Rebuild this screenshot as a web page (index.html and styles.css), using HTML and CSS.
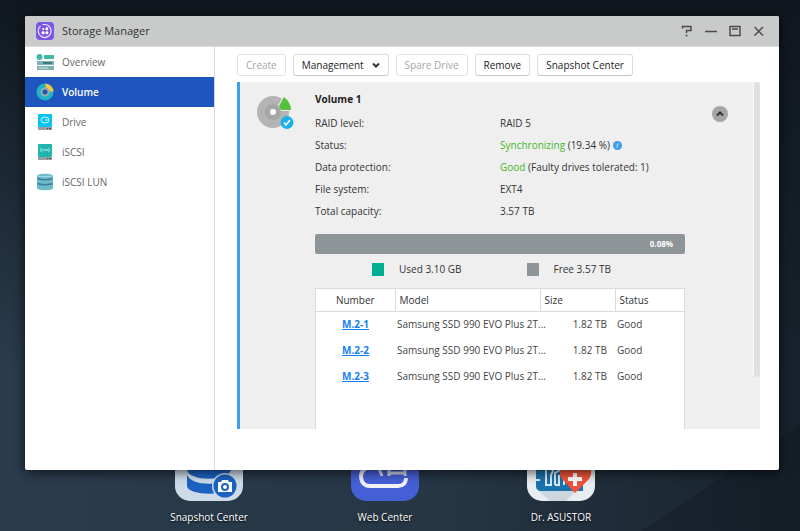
FILE: index.html
```html
<!DOCTYPE html>
<html lang="en">
<head>
    <meta charset="UTF-8">
    <title>Storage Manager</title>
    <link rel="stylesheet" href="styles.css">
</head>
<body>

<div class="desktop">
    <a class="app" href="#snapshot">
        <svg class="app-icon" viewBox="0 0 68 68">
            <rect width="68" height="68" rx="15" fill="#cddbe8"/>
            <g fill="#1c62c2">
                <path d="M12 14c0 13 44 13 44 0v10c0 13-44 13-44 0z"/>
                <path d="M12 27c0 13 44 13 44 0v9c0 13-44 13-44 0z"/>
                <path d="M12 42c4 9 22 11 44 6v6c-6 10-44 8-44-1z"/>
            </g>
            <circle cx="50" cy="53" r="13" fill="#cddbe8"/>
            <circle cx="50" cy="53" r="11.500" fill="#1c62c2"/>
            <path d="M43 49h3l1-2h6l1 2h3v10H43z" fill="#fff"/>
            <circle cx="50" cy="54" r="3" fill="none" stroke="#1c62c2" stroke-width="2"/>
        </svg>
        <span>Snapshot Center</span>
    </a>
    <a class="app" href="#web">
        <svg class="app-icon" viewBox="0 0 68 68">
            <rect width="68" height="68" rx="15" fill="#455fd6"/>
            <path d="M15 35c-8 5-6 18 4 18h28c5 0 8-3 8-8" fill="none" stroke="#f2f2fb" stroke-width="4"/>
            <path d="M27 34c2 4 3 6 4 9M38 34v9M54 34v9M38 40h16" fill="none" stroke="#d5d9f2" stroke-width="3"/>
        </svg>
        <span>Web Center</span>
    </a>
    <a class="app" href="#doctor">
        <svg class="app-icon" viewBox="0 0 68 68">
            <rect width="68" height="68" rx="15" fill="#e8edf1"/>
            <path d="M9 55l14 13h16L51 56z" fill="#ccd6df"/>
            <path d="M9 20h47v38H14c-3 0-5-2-5-5z" fill="#1c72ab"/>
            <path d="M8 47h5M19 30v22h5V42l2-4v-8M28 52V40l5-3v-7M28 52h4V42M37 52V39" fill="none" stroke="#d9edf8" stroke-width="2"/>
            <path d="M48 60L35 46c-5-7 0-15 7-15 3 0 5 1 7 4 2-3 4-4 7-4 7 0 11 8 6 15z" fill="#f0533a"/>
            <path d="M48 40v13M41 46h14" stroke="#fff" stroke-width="4"/>
        </svg>
        <span>Dr. ASUSTOR</span>
    </a>
</div>

<div class="window">
    <header class="titlebar">
        <svg class="title-icon" viewBox="0 0 18 18">
            <rect width="18" height="18" rx="4" fill="#7b55e8"/>
            <path d="M4.500 4A6.500 6.500 0 1 0 9 2.500H6.500" fill="none" stroke="#eee8ff" stroke-width="1.200"/>
            <g fill="#fff">
                <circle cx="7.200" cy="7" r="1"/>
                <rect x="9.500" y="5.300" width="2.700" height="3" rx="1"/>
                <rect x="5.700" y="9.300" width="2.800" height="3" rx="1"/>
                <rect x="9.500" y="9.300" width="2.800" height="3" rx="1"/>
            </g>
        </svg>
        <h1>Storage Manager</h1>
        <div class="window-controls">
            <button type="button" aria-label="Help">
                <svg viewBox="0 0 12 12"><path d="M1.500 3.500v-2h8.500v4H5.500v2.500M5.500 9.500v2"/></svg>
            </button>
            <button type="button" aria-label="Minimize">
                <svg viewBox="0 0 12 12"><path d="M0 6.500h12"/></svg>
            </button>
            <button type="button" aria-label="Maximize">
                <svg viewBox="0 0 12 12"><path d="M1 1.500h10v9H1zM3 4h6"/></svg>
            </button>
            <button type="button" aria-label="Close">
                <svg viewBox="0 0 12 12"><path d="M1.500 2l8.500 8.500M10 2l-8.500 8.500"/></svg>
            </button>
        </div>
    </header>

    <div class="window-body">
        <nav class="sidebar">
            <a href="#overview">
                <svg viewBox="0 0 18 18">
                    <circle cx="3.500" cy="4" r="3" fill="#3fb8a8"/>
                    <rect x="8" y="2" width="10" height="4" fill="#3fb8a8"/>
                    <rect x="1" y="8" width="17" height="4" fill="#7fb3b3"/>
                    <path d="M7 10h9" stroke="#3b7d80" stroke-width="2"/>
                    <rect x="1" y="13" width="17" height="4" fill="#7fb3b3"/>
                    <path d="M3 15h9" stroke="#d3e8e6"/>
                </svg>
                Overview
            </a>
            <a class="active" href="#volume">
                <svg viewBox="0 0 18 18">
                    <circle cx="9" cy="9" r="6" fill="none" stroke="#1fb5c4" stroke-width="5"/>
                    <path d="M9.500.5A8.500 8.500 0 0 1 17.500 8.500H13A4 4 0 0 0 9.500 5z" fill="#f6c53a"/>
                    <circle cx="9" cy="9" r="3.500" fill="#1f55ae" stroke="#9da9b5" stroke-width="2"/>
                </svg>
                Volume
            </a>
            <a href="#drive">
                <svg viewBox="0 0 18 18">
                    <rect x="2" y="1" width="14" height="13" rx="1" fill="#06c3f2"/>
                    <ellipse cx="9" cy="7" rx="4" ry="3" fill="none" stroke="#c9f4ff"/>
                    <path d="M9 7h4" stroke="#c9f4ff"/>
                    <rect x="2" y="14" width="14" height="3" fill="#9c9fa1"/>
                    <path d="M11 15.500h1M13 15.500h2" stroke="#42464a"/>
                </svg>
                Drive
            </a>
            <a href="#iscsi">
                <svg viewBox="0 0 18 18">
                    <rect x="2" y="1" width="14" height="13" rx="1" fill="#1fb5ae"/>
                    <path d="M6 5c-2 1-2 3 0 4M12 5c2 1 2 3 0 4M6 7h6" fill="none" stroke="#c6f2ee"/>
                    <rect x="2" y="14" width="14" height="3" fill="#9c9fa1"/>
                    <path d="M11 15.500h1M13 15.500h2" stroke="#42464a"/>
                </svg>
                iSCSI
            </a>
            <a href="#lun">
                <svg viewBox="0 0 18 18">
                    <path d="M1 3c0-3 16-3 16 0v12c0 3-16 3-16 0z" fill="#6dbcc9"/>
                    <path d="M1.500 5.500c3 1.500 12 1.500 15 0M1.500 10.500c3 1.500 12 1.500 15 0" fill="none" stroke="#3e7f9e" stroke-width="1.500"/>
                    <path d="M2 3c3 1 11 1 14 0" fill="none" stroke="#a9dde4"/>
                </svg>
                iSCSI LUN
            </a>
        </nav>

        <main class="content">
            <div class="toolbar">
                <button type="button" disabled>Create</button>
                <button type="button">Management
                    <svg class="chevron" viewBox="0 0 8 8"><path d="M1 2.500l3 3 3-3"/></svg>
                </button>
                <button type="button" disabled>Spare Drive</button>
                <button type="button">Remove</button>
                <button type="button">Snapshot Center</button>
            </div>

            <section class="volume-panel">
                <svg class="disk-icon" viewBox="0 0 38 34">
                    <circle cx="16" cy="17" r="16" fill="#b3b4b4"/>
                    <path d="M19 14L27 0h11v16H22z" fill="#efefef"/>
                    <circle cx="16" cy="17" r="8" fill="#a5a6a6"/>
                    <circle cx="16" cy="17" r="3" fill="#fff"/>
                    <path d="M27 2c4 3 7 8 7 13H24l-2-4z" fill="#55c13d"/>
                    <circle cx="30" cy="27.500" r="6.500" fill="#19b2e6"/>
                    <path d="M27 27.500l2 2.500 4-5" fill="none" stroke="#fff" stroke-width="1.500"/>
                </svg>

                <div class="volume">
                    <h2>Volume 1</h2>
                    <dl class="details">
                        <dt>RAID level:</dt>
                        <dd>RAID 5</dd>
                        <dt>Status:</dt>
                        <dd><span class="good">Synchronizing</span> (19.34 %) <span class="info">i</span></dd>
                        <dt>Data protection:</dt>
                        <dd><span class="good">Good</span> (Faulty drives tolerated: 1)</dd>
                        <dt>File system:</dt>
                        <dd>EXT4</dd>
                        <dt>Total capacity:</dt>
                        <dd>3.57 TB</dd>
                    </dl>

                    <div class="usage-bar">0.08%</div>
                    <div class="legend">
                        <span class="used">Used 3.10 GB</span>
                        <span class="free">Free 3.57 TB</span>
                    </div>

                    <div class="drives">
                        <table>
                            <thead>
                                <tr>
                                    <th class="col-number">Number</th>
                                    <th class="col-model">Model</th>
                                    <th class="col-size">Size</th>
                                    <th>Status</th>
                                </tr>
                            </thead>
                            <tbody>
                                <tr>
                                    <td><a href="#m2-1">M.2-1</a></td>
                                    <td>Samsung SSD 990 EVO Plus 2T...</td>
                                    <td>1.82 TB</td>
                                    <td>Good</td>
                                </tr>
                                <tr>
                                    <td><a href="#m2-2">M.2-2</a></td>
                                    <td>Samsung SSD 990 EVO Plus 2T...</td>
                                    <td>1.82 TB</td>
                                    <td>Good</td>
                                </tr>
                                <tr>
                                    <td><a href="#m2-3">M.2-3</a></td>
                                    <td>Samsung SSD 990 EVO Plus 2T...</td>
                                    <td>1.82 TB</td>
                                    <td>Good</td>
                                </tr>
                            </tbody>
                        </table>
                    </div>
                </div>

                <button class="collapse" type="button" aria-label="Collapse">
                    <svg class="chevron" viewBox="0 0 8 8"><path d="M1 5.500l3-3 3 3"/></svg>
                </button>
                <div class="scrollbar"></div>
            </section>
        </main>
    </div>
</div>

</body>
</html>
```
FILE: styles.css
```css
:root {
    --text: #333;
    --blue: #1f55be;
    --panel: #efefef;
    --line: #d9dadb;
    --green: #45b82a;
    --gray: #8d9599;
}

* { box-sizing: border-box; }

body {
    margin: 0;
    height: 100vh;
    overflow: hidden;
    position: relative;
    font-family: "Open Sans", "Noto Sans", sans-serif;
    font-size: 10px;
    line-height: 14px;
    color: var(--text);
    background:
        linear-gradient(146deg, transparent 90%, rgba(10, 16, 22, 0.25) 90%),
        linear-gradient(180deg, #10171e 0%, transparent 70%),
        linear-gradient(90deg, #2a3c4d 0%, #263645 55%, #18222c 100%);
}

h1, h2, dl, dd { margin: 0; }
a { color: inherit; text-decoration: none; }
button { font: inherit; color: inherit; }

/* Desktop shortcuts */
.desktop {
    height: 100%;
    display: flex;
    align-items: flex-end;
    padding: 0 0 7px 121px;
}

.app {
    width: 176px;
    display: flex;
    flex-direction: column;
    align-items: center;
    gap: 9px;
    color: #fff;
    text-shadow: 0 1px 2px #000;
}

.app-icon { width: 68px; height: 68px; }

/* Window */
.window {
    position: absolute;
    top: 16px;
    right: 21px;
    bottom: 61px;
    left: 25px;
    display: flex;
    flex-direction: column;
    background: #fff;
    border-radius: 2px;
    box-shadow: 0 2px 12px rgba(0, 0, 0, 0.7);
    overflow: hidden;
}

.titlebar {
    flex: none;
    height: 31px;
    display: flex;
    align-items: center;
    gap: 8px;
    padding: 0 14px 0 11px;
    background: #c9caca;
    border-bottom: 1px solid #dcdcdc;
}

.title-icon { width: 18px; height: 18px; }
.titlebar h1 { font-size: 11px; font-weight: normal; }

.window-controls { display: flex; gap: 12px; margin-left: auto; }
.window-controls button { width: 12px; height: 12px; padding: 0; border: 0; background: none; }
.window-controls svg { display: block; fill: none; stroke: #4c4c4c; stroke-width: 1.5; }

.window-body { flex: 1; min-height: 0; display: flex; }

.sidebar { width: 190px; flex: none; border-right: 1px solid var(--line); }

.sidebar a {
    height: 30px;
    display: flex;
    align-items: center;
    gap: 8px;
    padding-left: 11px;
    color: #666;
}

.sidebar svg { width: 18px; height: 18px; }
.sidebar .active { background: var(--blue); color: #fff; font-weight: 600; }

.content {
    flex: 1;
    min-width: 0;
    display: flex;
    flex-direction: column;
    gap: 6px;
    padding: 7px 19px 41px 22px;
}

.toolbar { display: flex; gap: 7px; }

.toolbar button {
    height: 22px;
    display: flex;
    align-items: center;
    gap: 8px;
    padding: 0 8px;
    background: #fff;
    border: 1px solid #dedede;
    border-bottom-color: #c6c6c6;
    border-radius: 3px;
    color: #222;
}

.toolbar button:disabled { color: #a6a6a6; border-color: #e4e4e4; }

.chevron { width: 8px; height: 8px; fill: none; stroke: #333; stroke-width: 2; }

/* Volume details */
.volume-panel {
    flex: 1;
    min-height: 0;
    display: flex;
    align-items: flex-start;
    background: var(--panel);
    border-left: 3px solid #3e9ded;
    overflow: hidden;
}

.disk-icon { flex: none; width: 38px; height: 34px; margin: 13px 20px 0 17px; }

.volume {
    flex: 1;
    align-self: stretch;
    display: flex;
    flex-direction: column;
    padding-top: 6px;
}

.volume h2 { font-size: 10px; line-height: 22px; color: #222; }

.details {
    display: grid;
    grid-template-columns: 1fr 1fr;
    line-height: 22px;
    padding-top: 2px;
}

.details dd { white-space: nowrap; }
.good { color: var(--green); }

.info {
    display: inline-block;
    width: 9px;
    height: 9px;
    border-radius: 50%;
    background: #3e9ded;
    color: #fff;
    font-size: 7px;
    font-style: italic;
    line-height: 9px;
    text-align: center;
    vertical-align: 1px;
}

.usage-bar {
    height: 20px;
    margin-top: 12px;
    padding-right: 12px;
    border-radius: 2px;
    background: var(--gray);
    color: #fff;
    font-size: 8px;
    font-weight: bold;
    line-height: 20px;
    text-align: right;
}

.legend { display: flex; gap: 65px; padding: 8px 0 12px 57px; }
.legend span { display: flex; align-items: center; gap: 15px; }
.legend span::before { content: ""; width: 12px; height: 13px; background: var(--gray); }
.legend .used::before { background: #00ae92; }

.drives { flex: 1; background: #fff; border: 1px solid var(--line); border-bottom: 0; }
.drives table { width: 100%; table-layout: fixed; border-collapse: collapse; }

.drives th {
    height: 22px;
    padding: 0 4px;
    border-bottom: 1px solid var(--line);
    font-weight: normal;
    text-align: left;
}

.drives th + th { border-left: 1px solid var(--line); }
.drives .col-number { width: 79px; text-align: center; }
.drives .col-model { width: 145px; }
.drives .col-size { width: 75px; }

.drives td { height: 26px; padding: 0 2px; color: #444; white-space: nowrap; }
.drives td:first-child { text-align: center; }
.drives td:nth-child(3) { padding-right: 8px; text-align: right; }
.drives td a { color: #1680ec; font-weight: bold; text-decoration: underline; }

.collapse {
    flex: none;
    width: 16px;
    height: 16px;
    margin: 24px 25px 0 27px;
    padding: 0;
    border: 0;
    border-radius: 50%;
    background: #a5a5a5;
    line-height: 8px;
}

.scrollbar { flex: none; width: 7px; height: 85%; border-radius: 3px; background: #e0e0e0; border-left: 1px solid #f8f8f8; }
```
